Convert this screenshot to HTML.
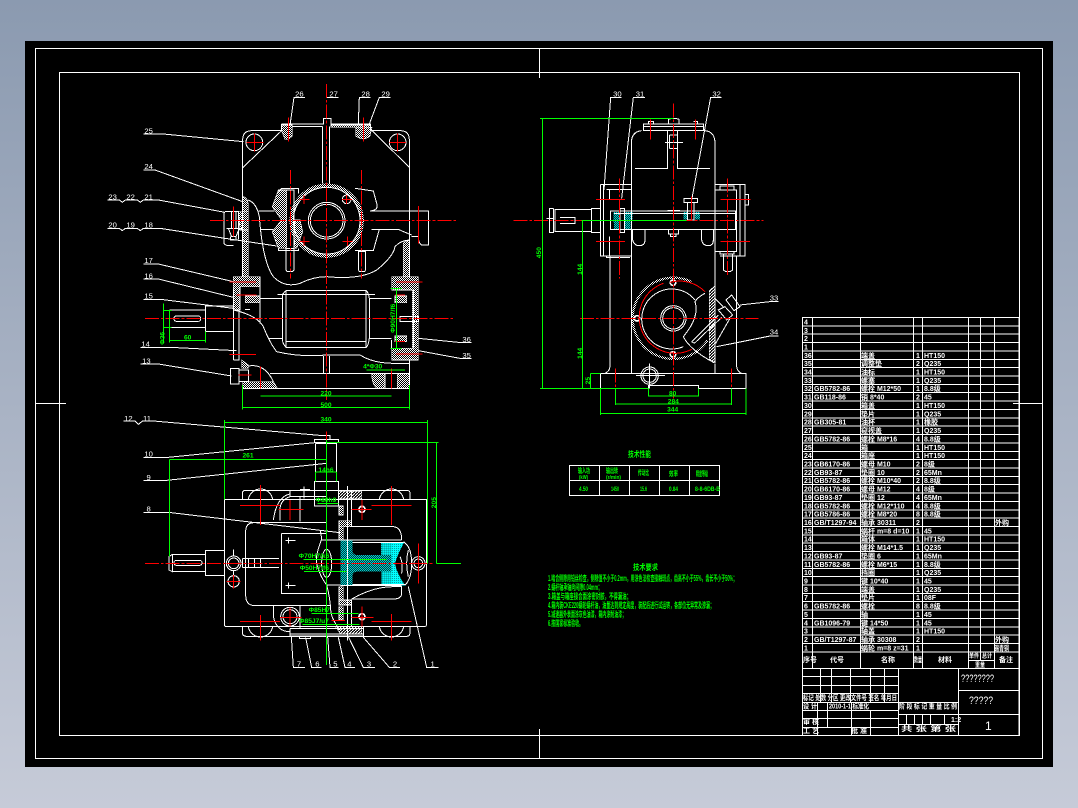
<!DOCTYPE html>
<html lang="zh"><head><meta charset="utf-8"><title>CAD</title>
<style>
html,body{margin:0;padding:0;width:1078px;height:808px;overflow:hidden;background:linear-gradient(#8b9ab0,#c6cbd8)}
svg{display:block;position:absolute;left:0;top:0}
text{font-family:"Liberation Sans","Noto Sans CJK SC",sans-serif}
.w{fill:none;stroke:#fff;stroke-width:3}
.g{fill:none;stroke:#00ff00;stroke-width:3}
.r{fill:none;stroke:#ff0000;stroke-width:3;stroke-dasharray:42 6 8 6}
.rs{fill:none;stroke:#ff0000;stroke-width:3}
.d{fill:url(#dot);stroke:#fff;stroke-width:2}
.lab text{fill:#fff;font-size:23px;text-anchor:middle}
.gt text{fill:#00ff00;font-size:20px;font-weight:bold;text-anchor:middle}
.t text{fill:#fff;font-size:7px;font-weight:bold}
.n text{fill:#00ff00;font-size:8px;font-weight:bold}
</style></head><body>
<svg width="1078" height="808" viewBox="0 0 1078 808" shape-rendering="crispEdges">
<defs>
<pattern id="dot" width="6" height="6" patternUnits="userSpaceOnUse"><rect width="6" height="6" fill="#000"/><rect width="3" height="3" fill="#fff"/><rect x="3" y="3" width="3" height="3" fill="#fff"/></pattern>
<pattern id="cy" width="6" height="6" patternUnits="userSpaceOnUse"><rect width="6" height="6" fill="#003c3c"/><rect width="3" height="3" fill="#00d0d0"/><rect x="3" y="3" width="3" height="3" fill="#00d0d0"/></pattern>
<pattern id="cb" width="6" height="6" patternUnits="userSpaceOnUse"><rect width="6" height="6" fill="#00ffff"/><rect width="3" height="3" fill="#00a0a0"/></pattern>
<pattern id="hd" width="9" height="9" patternUnits="userSpaceOnUse"><rect width="9" height="9" fill="#000"/><path d="M0 9L9 0" stroke="#fff" stroke-width="3"/></pattern>
</defs>
<rect x="25" y="41" width="1028" height="726" fill="#000"/>
<g fill="none" stroke="#fff">
<rect x="35.500" y="48.500" width="1007" height="710"/>
<rect x="59.500" y="72.500" width="960" height="663"/>
<path d="M539.500 48V78M539.500 729V758M35 403.500H66M1013 403.500H1042"/>
</g>

<!-- FRONT VIEW -->
<g transform="translate(100 80) scale(.33333)">
<g class="d">
<path d="M545 135H577V168L565 178H555L545 152Z"/>
<path d="M693 135H812V142H693Z"/>
<path d="M767 142H816L810 168Q790 185 767 168Z"/>
<path d="M428 350Q445 352 445 380V590H428Z"/>
<path d="M910 490Q918 482 928 480V590H910Z"/>
<path d="M535 330H560V505H535L517 455L545 420L517 380Z"/>
<path d="M585 420H600L608 455L590 505H583Z"/>
<path d="M415 395H445V450H420Z"/>
<path d="M400 590H480V620H420V690H400Z"/>
<path d="M436 648H480V668H436Z"/>
<path d="M875 590H955V840H875V805H937V630H875Z"/>
<path d="M885 648H920V668H885Z"/><path d="M885 768H920V785H885Z"/>
<path d="M428 905H520L532 925H428Z"/>
<path d="M815 880H855V925H830Q815 910 815 880Z"/>
<path d="M892 880H928V925H892Z"/>
<path d="M425 840L445 855V865H425Z"/>
</g>
<circle cx="680" cy="422" r="106" fill="none" stroke="url(#dot)" stroke-width="11"/>
<g class="w">
<path d="M428 263V180Q428 152 456 152H545M815 152H900Q928 152 928 180V590M428 263L545 152M928 262L816 152M428 263V590"/>
<circle cx="463" cy="187" r="25"/><circle cx="893" cy="187" r="25"/>
<path d="M545 132H670V115H693V132H812V152M577 140H667M545 132V152"/>
<path d="M667 310V160M688 310V160M667 160V140M688 160V140"/>
<circle cx="680" cy="422" r="100"/>
<circle cx="680" cy="422" r="55"/><circle cx="680" cy="422" r="49"/>
<circle cx="740" cy="358" r="13"/>
<path d="M475 393H523M482 448H520M815 393H985V495H965Q955 490 955 470H935M815 448H895Q910 455 935 465M810 393Q838 390 830 370L820 333L765 325M838 448L820 512H765"/>
<path d="M545 325H595V340M545 325L535 335M535 505V512H595V505"/>
<path d="M445 360Q470 370 478 410Q488 545 520 590Q555 625 600 610Q640 590 680 590Q780 600 830 570Q880 530 885 500Q900 482 928 480"/>
<path d="M558 505H582V570L578 575H562L558 570ZM775 515H797V570L793 575H779L775 570Z"/>
<path d="M560 330H582V505H560"/>
<path d="M375 395H415V478M372 395V490Q375 497 390 497H400M380 445H428M385 445L395 470H408L418 445M395 395V445M408 395V445M392 470V480H408V470"/>
<path d="M532 643H825M558 632H798V802H558ZM548 640V785M808 655V775M548 645Q552 635 560 632M798 632Q805 635 808 655M808 655H875M808 775H875M480 655H548M505 775H548M548 785Q552 798 560 802M798 802Q805 798 808 775M558 785H798"/>
<path d="M208 690H316V678H400M208 742H316V754H400M316 678V754M208 690V742M400 680V840M417 690V840H400"/>
<rect x="222" y="708" width="80" height="16" rx="7"/>
<path d="M400 690Q470 705 490 740Q510 790 530 815Q600 832 680 825H780Q820 850 880 850H928M928 840V925M428 925H928M510 880H928M670 828V880M688 828V880"/>
<path d="M392 865H417V912H392ZM417 870H445V905H417M445 858Q495 850 520 905"/>
<path d="M400 625V680M480 600V730M875 625H890M875 780V805M435 688H450M900 710H955V724H900ZM940 630V805"/>
<path d="M615 52H582L570 135M678 52H715M812 52H778L775 130M872 52H838L808 132M130 162H190L430 185M130 270H165L428 365M22 360H58L67 367L76 360H112L121 367L130 360H175L375 397M22 445H58L67 452L76 445H112L121 452L130 445H180L375 475L530 498M130 552H175L400 605M130 597H175L400 652M130 659H190L400 685M122 802H210L410 812M122 852H175L395 888M1115 788H1085L955 775M1115 836H1085L955 812"/>
</g>
<g class="r">
<path d="M680 12V960"/><path d="M330 421H1072"/><path d="M135 715H1065"/><path d="M572 270V595"/><path d="M785 270V595"/>
</g>
<g class="rs">
<path d="M440 187H490M463 160V215M868 187H918M893 160V215M598 358H628M612 345V372M726 358H756M740 345V372M598 484H628M612 470V498M728 484H758M742 470V498M565 112V185M790 112V185M400 380V470M955 378V490M388 606H468M888 606H968M388 823H468M888 822H968M481 860V925M875 865V925M415 885H455M410 645H470M885 645H915M885 785H915"/>
</g>
<g class="g">
<path d="M190 670V790M190 692H215M190 742H215M208 692V788M316 754V788M208 782H316M800 870H915M428 915V960M928 915V960M481 948H875M889 625V805M871 625H905M871 805H905"/>
</g>
<g class="gt">
<text x="263" y="778">60</text>
<text x="818" y="866">4*Φ30</text>
<text x="678" y="947">220</text>
<text transform="translate(193 775) rotate(-90)">Φ36</text>
<text transform="translate(885 715) rotate(-90)">Φ90H7/f6</text>
</g>
<g class="lab">
<text x="598" y="50">26</text><text x="701" y="50">27</text><text x="797" y="50">28</text><text x="857" y="50">29</text>
<text x="146" y="160">25</text><text x="146" y="267">24</text>
<text x="38" y="358">23</text><text x="92" y="358">22</text><text x="146" y="358">21</text>
<text x="38" y="442">20</text><text x="92" y="442">19</text><text x="146" y="442">18</text>
<text x="146" y="549">17</text><text x="146" y="595">16</text><text x="146" y="656">15</text>
<text x="137" y="800">14</text><text x="139" y="850">13</text>
<text x="1100" y="786">36</text><text x="1100" y="834">35</text>
</g>
</g>

<!-- TOP VIEW -->
<g transform="translate(100 400) scale(.33333)">
<path d="M722 422H757V450Q757 465 772 465H843V428H912Q890 470 885 490Q890 520 915 556H845V515H772Q757 515 757 530V556H722Z" fill="url(#cy)"/>
<path d="M875 428H912Q890 470 885 490Q890 520 915 556H875Z" fill="url(#cb)"/>
<path d="M845 428H875V465H845ZM845 515H875V556H845Z" fill="url(#cb)" opacity=".75"/>
<g class="d">
<path d="M717 318H730V345H717ZM717 362H755V380H717ZM717 380H730V420H717ZM717 560H730V600H717ZM717 600H755V615H717ZM717 620H730V660H717Z"/>
</g>
<path d="M716 273H785V297H716ZM706 680H785V702H722Z" fill="url(#hd)" stroke="#fff" stroke-width="2"/>
<g class="w">
<path d="M373 298H980V672Q980 680 972 680H380Q373 680 373 672ZM427 298V280Q427 271 437 271H920Q930 271 930 280V298M427 680V697Q427 709 440 709H920Q930 709 930 697V680"/>
<path d="M445 298A37 37 0 0 1 518 298M838 298A37 37 0 0 1 911 298M445 680A37 37 0 0 0 518 680M838 680A37 37 0 0 0 911 680"/>
<path d="M680 368H462Q437 368 437 395V585Q437 617 465 617H690M544 400H680M544 400V581H680"/>
<path d="M556 422H574M565 413V431M556 556H574M565 547V565M574 422H587M574 556H587"/>
<path d="M217 463H316V451H373M217 515H316V527H373M316 451V527M217 463L207 470V510L217 515V463"/>
<rect x="222" y="481" width="84" height="15" rx="7"/>
<circle cx="401" cy="490" r="22"/><circle cx="401" cy="490" r="16"/><circle cx="401" cy="544" r="17"/>
<circle cx="955" cy="490" r="20"/><circle cx="955" cy="490" r="13"/>
<circle cx="786" cy="328" r="9" stroke-width="5"/><circle cx="786" cy="650" r="9" stroke-width="5"/>
<path d="M401 448V470M401 512V525"/>
<path d="M427 475H537M427 503H537M427 475V503M445 475V503M463 475V503M481 475V503"/>
<ellipse cx="680" cy="490" rx="15" ry="42"/>
<path d="M664 420Q645 470 650 490Q660 530 680 555Q690 590 693 640Q700 665 720 690M664 420H722M680 555H722M660 390Q665 405 664 420"/>
<path d="M722 420H905M757 428H910M757 553H915M722 556H905M910 425Q935 440 935 490Q935 535 915 556M900 470Q910 490 905 520M925 450Q915 490 925 530"/>
<path d="M643 245H716V318H643ZM646 130H710V216M646 130V216M643 118H716V128H643ZM666 107H690V118"/>
<path d="M755 272V380M755 380H880Q905 382 905 420M755 597Q820 560 880 560H905V580Q905 597 880 597H755M755 600V680"/>
<path d="M570 272H680M570 290H680M570 272V290M612 260V295M600 268H630M643 290V318"/>
<path d="M520 360Q530 290 570 282M540 362V330Q540 300 570 290M600 290V365M520 617V650Q530 695 570 695M600 617V685"/>
<circle cx="570" cy="650" r="28"/><circle cx="570" cy="650" r="21"/>
<path d="M570 685H790M570 702H790M570 708H790M570 685V710M790 680V712M742 258V722M598 708H632V716H598Z" />
<path d="M1015 802H980L925 560M900 802H868L790 712M825 802H790L745 710M765 802H735L715 712M715 802H690L683 710M665 802H635L617 712M615 802H580L574 710M130 337H205L720 398M130 241H200L680 190M130 172H205L645 128M70 63H105L115 73L128 63H160L670 107"/>
</g>
<g class="r"><path d="M135 490H1000"/><path d="M680 95V740"/></g>
<g class="rs">
<path d="M420 316H540M481 255V375M815 316H935M874 258V375M420 664H540M481 645V722M815 664H935M874 642V722M535 328H610M570 300V360M540 652H605M570 622V680M755 328H815M786 300V360M755 652H820M786 620V680M380 490H425M380 544H422M401 525V565M930 490H978M955 430V550M695 662H735"/>
</g>
<g class="g">
<path d="M680 120V795M373 67H983M373 60V298M983 60V490M208 178H680M208 178V470M680 127H1016M1010 127V490M1010 490H1083M427 0V28M928 0V28M427 22H928M646 216H710M646 216V245M710 216V245M652 310H716M610 478H860M612 514H740M635 640H775M608 673H778"/>
</g>
<g class="gt">
<text x="678" y="21">500</text><text x="678" y="64">340</text><text x="444" y="173">261</text><text x="678" y="216">14h6</text>
<text x="678" y="306">Φ80h9</text><text x="642" y="474">Φ70H7/k6</text><text x="643" y="510">Φ50H7/f6</text><text x="658" y="636">Φ85H7</text><text x="642" y="669">Φ85J7/u7</text>
<text transform="translate(1008 308) rotate(-90)">205</text>
</g>
<g class="lab">
<text x="85" y="63">12</text><text x="141" y="63">11</text><text x="146" y="170">10</text><text x="146" y="240">9</text><text x="146" y="335">8</text>
<text x="597" y="800">7</text><text x="652" y="800">6</text><text x="706" y="800">5</text><text x="748" y="800">4</text><text x="807" y="800">3</text><text x="885" y="800">2</text><text x="998" y="800">1</text>
</g>
</g>

<!-- SIDE VIEW -->
<g transform="translate(510 80) scale(.33333)">
<path d="M310 396H332V448H312ZM345 396H368V420H362V448H345ZM520 396H532V418H520ZM555 396H570V418H555Z" fill="url(#cy)"/>
<circle cx="490" cy="715" r="122" fill="none" stroke="url(#dot)" stroke-width="7" stroke-dasharray="560 210" stroke-dashoffset="-70"/>
<path d="M598 632L615 618V848L598 838Z" fill="url(#hd)" stroke="#fff" stroke-width="2"/>
<g class="w">
<path d="M400 132H580V152H400ZM400 140H580M415 132V124H430V132M550 124H563V132M475 132V118Q490 112 507 118V132"/>
<path d="M364 190Q364 155 395 152M585 152Q615 155 615 190M364 190V880M615 190V620M615 850V880"/>
<path d="M375 265H473V152M503 152V265H600M465 187H519M478 165H503M478 205H503M478 165V205M503 165V205"/>
<path d="M272 313H364M272 313V528H364M280 313V528M290 328H364M298 328V360M298 470V528M290 528V533H360"/>
<path d="M302 393H677V449H302ZM302 393V449M312 400H677"/>
<path d="M272 385H244V458H272M244 388H135V455H244M130 385V458H118V385H130M110 415H130M150 412H195V430H150"/>
<path d="M616 313H705V528H630M690 313V528M630 318H672V330H630ZM617 330H680V515H617M630 515H672V522H630ZM640 522H668V570L660 575H648L640 570ZM705 343H716V375H705"/>
<path d="M300 530V860Q298 875 285 880M680 530V860Q682 875 695 880M272 880H708V925H565V916H415V925H272Z"/>
<circle cx="419" cy="887" r="26"/><circle cx="419" cy="887" r="20"/><path d="M378 887H465M419 850V925"/>
<path d="M555 660A90 90 0 1 0 520 800"/>
<circle cx="490" cy="715" r="38"/><circle cx="490" cy="715" r="32"/>
<path d="M585 640Q565 650 555 665Q570 710 520 770Q540 810 612 848"/>
<path d="M545 785L625 705M553 790L635 712M545 785L553 790M615 655L640 680M660 715L617 790M625 690L645 680L668 705L650 720ZM648 660L665 645L690 680L672 692Z"/>
<path d="M522 355H562V368H522ZM532 368H552V420H532ZM472 392H510M475 449V462H505V449M482 462V470H498V462M368 449V480Q372 497 388 497Q405 497 405 480V449M575 449V480Q578 497 595 497Q610 497 610 480V449"/>
<path d="M335 52H302L282 330M405 52H370L335 355M635 52H602L545 360M805 665H780L690 675M805 768H780L620 800"/>
<path d="M330 385H344V458H330Z"/>
<circle cx="489" cy="608" r="8" stroke-width="5"/><circle cx="381" cy="715" r="8" stroke-width="5"/><circle cx="489" cy="823" r="8" stroke-width="5"/>
</g>
<path d="M460 610A108 108 0 1 0 545 808" fill="none" stroke="#f00" stroke-width="3"/>
<path d="M585 635A108 108 0 0 0 480 607" fill="none" stroke="#f00" stroke-width="3"/>
<g class="r"><path d="M490 70V955"/><path d="M10 421H760"/><path d="M210 715H745"/><path d="M328 295V595"/><path d="M652 295V590"/><path d="M317 865V925"/><path d="M665 865V925"/></g>
<g class="rs"><path d="M258 358H345M258 484H345M632 358H722M632 484H720M422 118V178M556 118V178M545 350V422"/></g>
<g class="g">
<path d="M90 115H490M97 115V925M90 925H415M218 420V925M215 421H530M242 880V925M242 880H272M272 925V1005M708 925V1005M272 1000H708M317 925V975M665 925V975M317 972H665M415 925V950M565 925V950M415 948H565"/>
</g>
<g class="gt">
<text transform="translate(93 518) rotate(-90)">450</text><text transform="translate(216 568) rotate(-90)">144</text><text transform="translate(216 820) rotate(-90)">144</text><text transform="translate(240 902) rotate(-90)">25</text>
<text x="488" y="946">80</text><text x="490" y="970">284</text><text x="488" y="995">344</text>
</g>
<g class="lab">
<text x="322" y="50">30</text><text x="390" y="50">31</text><text x="620" y="50">32</text><text x="792" y="662">33</text><text x="792" y="764">34</text>
</g>
</g>

<!-- TECH TABLE -->
<g fill="none" stroke="#fff">
<rect x="569.500" y="465.500" width="150" height="30"/>
<path d="M569 480.500H720M599.500 465V495M629.500 465V495M659.500 465V495M689.500 465V495"/>
</g>
<g class="n">
<text x="628" y="457" textLength="23" lengthAdjust="spacingAndGlyphs">技术性能</text>
<text x="578" y="473" textLength="12" lengthAdjust="spacingAndGlyphs" style="font-size:7px">输入功</text>
<text x="579" y="479" style="font-size:5px" textLength="9" lengthAdjust="spacingAndGlyphs">(kW)</text>
<text x="606" y="473" style="font-size:7px" textLength="12" lengthAdjust="spacingAndGlyphs">输出转</text>
<text x="606" y="479" style="font-size:5px" textLength="15" lengthAdjust="spacingAndGlyphs">(r/min)</text>
<text x="638" y="475" style="font-size:7px" textLength="11" lengthAdjust="spacingAndGlyphs">传动比</text>
<text x="669" y="476" style="font-size:7px" textLength="9" lengthAdjust="spacingAndGlyphs">效率</text>
<text x="696" y="476" style="font-size:7px" textLength="12" lengthAdjust="spacingAndGlyphs">精度等级</text>
<text x="579" y="491" style="font-size:6px" textLength="9" lengthAdjust="spacingAndGlyphs">4.50</text>
<text x="611" y="491" style="font-size:6px" textLength="8" lengthAdjust="spacingAndGlyphs">1450</text>
<text x="640" y="491" style="font-size:6px" textLength="7" lengthAdjust="spacingAndGlyphs">15.6</text>
<text x="669" y="491" style="font-size:6px" textLength="9" lengthAdjust="spacingAndGlyphs">0.84</text>
<text x="695" y="491" style="font-size:6px" textLength="25" lengthAdjust="spacingAndGlyphs">8-8-6DB-B</text>
<text x="633" y="570" textLength="25" lengthAdjust="spacingAndGlyphs">技术要求</text>
<text x="548" y="581" textLength="189" lengthAdjust="spacingAndGlyphs">1.啮合侧隙用铅丝检查，侧隙值不小于0.2mm，用涂色法检查接触斑点，齿高不小于55%，齿长不小于50%；</text>
<text x="548" y="590" textLength="54" lengthAdjust="spacingAndGlyphs">2.蜗杆轴承轴向间隙0.04mm；</text>
<text x="548" y="599" textLength="83" lengthAdjust="spacingAndGlyphs">3.箱盖与箱座接合面涂密封胶，不得漏油；</text>
<text x="548" y="608" textLength="166" lengthAdjust="spacingAndGlyphs">4.箱内装CKE220蜗轮蜗杆油，油量达到规定高度，装配后进行试运转，各部位无异常及渗漏；</text>
<text x="548" y="617" textLength="78" lengthAdjust="spacingAndGlyphs">5.减速器外表面涂灰色油漆，箱内涂耐油漆；</text>
<text x="548" y="626" textLength="35" lengthAdjust="spacingAndGlyphs">6.按国家标准验收。</text>
</g>

<!-- PARTS TABLE -->
<g fill="none" stroke="#fff">
<path d="M802.500 317.500V735.500M812.500 317.500V668M860.500 317.500V668M913.500 317.500V668M922.500 317.500V668M968.500 317.500V668M980.500 317.500V652M994.500 317.500V668M1019 317.500V735"/>
<path d="M802 317.500h217M802 325.900h217M802 334.200h217M802 342.600h217M802 350.900h217M802 359.300h217M802 367.700h217M802 376h217M802 384.400h217M802 392.700h217M802 401.100h217M802 409.500h217M802 417.800h217M802 426.200h217M802 434.500h217M802 442.900h217M802 451.300h217M802 459.600h217M802 468h217M802 476.300h217M802 484.700h217M802 493.100h217M802 501.400h217M802 509.800h217M802 518.100h217M802 526.500h217M802 534.900h217M802 543.200h217M802 551.600h217M802 559.900h217M802 568.300h217M802 576.700h217M802 585h217M802 593.400h217M802 601.700h217M802 610.100h217M802 618.500h217M802 626.800h217M802 635.200h217M802 643.500h217M802 651.900h217M802 668.500h217M968 660.500H994M980.500 652V660"/>
<path d="M802 676.500H898M802 685.500H898M802 693.500H898M802 702.500H898M802 710.500H898M802 718.500H898M802 727.500H898M802 735.500H1019"/>
<path d="M898.500 668V735.500M958.500 668V735.500M958 690.500H1019M958 714.500H1019M898 702.500H958M898 714.500H958M898 724.500H958"/>
<path d="M820.500 668V702M831.500 668V702M850.500 668V702M870.500 668V702M884.500 668V702M817.500 702V735M827.500 702V727M851.500 702V735M870.500 710V735"/>
<path d="M906.500 714V724M914.500 714V724M922.500 714V724M930.500 714V724M944.500 714V724"/>
</g>
<g class="t">
<g>
<text x="804" y="324.400">4</text><text x="804" y="332.800">3</text><text x="804" y="341.100">2</text><text x="804" y="349.500">1</text>
<text x="804" y="357.800">36</text><text x="804" y="366.200">35</text><text x="804" y="374.500">34</text><text x="804" y="382.900">33</text><text x="804" y="391.200">32</text><text x="804" y="399.600">31</text><text x="804" y="408">30</text><text x="804" y="416.300">29</text><text x="804" y="424.700">28</text><text x="804" y="433">27</text><text x="804" y="441.400">26</text><text x="804" y="449.800">25</text><text x="804" y="458.100">24</text><text x="804" y="466.500">23</text><text x="804" y="474.800">22</text><text x="804" y="483.200">21</text><text x="804" y="491.600">20</text><text x="804" y="499.900">19</text><text x="804" y="508.300">18</text><text x="804" y="516.600">17</text><text x="804" y="525">16</text><text x="804" y="533.400">15</text><text x="804" y="541.700">14</text><text x="804" y="550.100">13</text><text x="804" y="558.400">12</text><text x="804" y="566.800">11</text><text x="804" y="575.200">10</text><text x="804" y="583.500">9</text><text x="804" y="591.900">8</text><text x="804" y="600.200">7</text><text x="804" y="608.600">6</text><text x="804" y="617">5</text><text x="804" y="625.300">4</text><text x="804" y="633.700">3</text><text x="804" y="642">2</text><text x="804" y="650.400">1</text>
</g>
<g>
<text x="814" y="391.200">GB5782-86</text><text x="814" y="399.600">GB118-86</text><text x="814" y="424.700">GB305-81</text><text x="814" y="441.400">GB5782-86</text><text x="814" y="466.500">GB6170-86</text><text x="814" y="474.800">GB93-87</text><text x="814" y="483.200">GB5782-86</text><text x="814" y="491.600">GB6170-86</text><text x="814" y="499.900">GB93-87</text><text x="814" y="508.300">GB5782-86</text><text x="814" y="516.600">GB5786-86</text><text x="814" y="525">GB/T1297-94</text><text x="814" y="558.400">GB93-87</text><text x="814" y="566.800">GB5782-86</text><text x="814" y="608.600">GB5782-86</text><text x="814" y="625.300">GB1096-79</text><text x="814" y="642">GB/T1297-87</text>
</g>
<g>
<text x="861" y="357.800">端盖</text><text x="861" y="366.200">调整垫</text><text x="861" y="374.500">油标</text><text x="861" y="382.900">螺塞</text><text x="861" y="391.200">螺栓 M12*50</text><text x="861" y="399.600">销 8*40</text><text x="861" y="408">箱盖</text><text x="861" y="416.300">垫片</text><text x="861" y="424.700">油杯</text><text x="861" y="433">窥视盖</text><text x="861" y="441.400">螺栓 M8*16</text><text x="861" y="449.800">箱</text><text x="861" y="458.100">箱座</text><text x="861" y="466.500">螺母 M10</text><text x="861" y="474.800">垫圈 10</text><text x="861" y="483.200">螺栓 M10*40</text><text x="861" y="491.600">螺母 M12</text><text x="861" y="499.900">垫圈 12</text><text x="861" y="508.300">螺栓 M12*110</text><text x="861" y="516.600">螺栓 M8*20</text><text x="861" y="525">轴承 30311</text><text x="861" y="533.400">蜗杆 m=8 d=10</text><text x="861" y="541.700">箱体</text><text x="861" y="550.100">螺栓 M14*1.5</text><text x="861" y="558.400">垫圈 6</text><text x="861" y="566.800">螺栓 M6*15</text><text x="861" y="575.200">挡圈</text><text x="861" y="583.500">键 10*40</text><text x="861" y="591.900">端盖</text><text x="861" y="600.200">垫片</text><text x="861" y="608.600">螺栓</text><text x="861" y="617">轴</text><text x="861" y="625.300">键 14*50</text><text x="861" y="633.700">轴盖</text><text x="861" y="642">轴承 30308</text><text x="861" y="650.400">蜗轮 m=8 z=31</text>
</g>
<g>
<text x="916" y="357.800">1</text><text x="916" y="366.200">2</text><text x="916" y="374.500">1</text><text x="916" y="382.900">1</text><text x="916" y="391.200">1</text><text x="916" y="399.600">2</text><text x="916" y="408">1</text><text x="916" y="416.300">1</text><text x="916" y="424.700">1</text><text x="916" y="433">1</text><text x="916" y="441.400">4</text><text x="916" y="449.800">1</text><text x="916" y="458.100">1</text><text x="916" y="466.500">2</text><text x="916" y="474.800">2</text><text x="916" y="483.200">2</text><text x="916" y="491.600">4</text><text x="916" y="499.900">4</text><text x="916" y="508.300">4</text><text x="916" y="516.600">8</text><text x="916" y="525">2</text><text x="916" y="533.400">1</text><text x="916" y="541.700">1</text><text x="916" y="550.100">1</text><text x="916" y="558.400">1</text><text x="916" y="566.800">1</text><text x="916" y="575.200">1</text><text x="916" y="583.500">1</text><text x="916" y="591.900">1</text><text x="916" y="600.200">1</text><text x="916" y="608.600">8</text><text x="916" y="617">1</text><text x="916" y="625.300">1</text><text x="916" y="633.700">1</text><text x="916" y="642">2</text><text x="916" y="650.400">1</text>
</g>
<g>
<text x="924" y="357.800">HT150</text><text x="924" y="366.200">Q235</text><text x="924" y="374.500">HT150</text><text x="924" y="382.900">Q235</text><text x="924" y="391.200">8.8级</text><text x="924" y="399.600">45</text><text x="924" y="408">HT150</text><text x="924" y="416.300">Q235</text><text x="924" y="424.700">橡胶</text><text x="924" y="433">Q235</text><text x="924" y="441.400">8.8级</text><text x="924" y="449.800">HT150</text><text x="924" y="458.100">HT150</text><text x="924" y="466.500">8级</text><text x="924" y="474.800">65Mn</text><text x="924" y="483.200">8.8级</text><text x="924" y="491.600">8级</text><text x="924" y="499.900">65Mn</text><text x="924" y="508.300">8.8级</text><text x="924" y="516.600">8.8级</text><text x="924" y="533.400">45</text><text x="924" y="541.700">HT150</text><text x="924" y="550.100">Q235</text><text x="924" y="558.400">65Mn</text><text x="924" y="566.800">8.8级</text><text x="924" y="575.200">Q235</text><text x="924" y="583.500">45</text><text x="924" y="591.900">Q235</text><text x="924" y="600.200">08F</text><text x="924" y="608.600">8.8级</text><text x="924" y="617">45</text><text x="924" y="625.300">45</text><text x="924" y="633.700">HT150</text>
</g>
<text x="995" y="525">外购</text><text x="995" y="642">外购</text><text x="994" y="650.400" textLength="15" lengthAdjust="spacingAndGlyphs">锡青铜</text>
<text x="803" y="662">序号</text><text x="830" y="662">代号</text><text x="881" y="662">名称</text><text x="914" y="662" textLength="8" lengthAdjust="spacingAndGlyphs">数量</text><text x="938" y="662">材料</text>
<text x="969" y="658" style="font-size:6px" textLength="10" lengthAdjust="spacingAndGlyphs">单件</text><text x="982" y="658" style="font-size:6px" textLength="10" lengthAdjust="spacingAndGlyphs">总计</text><text x="975" y="667" style="font-size:6px" textLength="10" lengthAdjust="spacingAndGlyphs">重量</text><text x="999" y="662">备注</text>
<text x="803" y="700" textLength="94" lengthAdjust="spacingAndGlyphs">标记 处数 分区 更改文件号 签名 年月日</text>
<text x="803" y="708.500" textLength="14" lengthAdjust="spacingAndGlyphs">设 计</text><text x="829" y="708.500" textLength="40" lengthAdjust="spacingAndGlyphs">2010-1-1 标准化</text>
<text x="899" y="708.500" textLength="58" lengthAdjust="spacingAndGlyphs">阶 段 标 记 重 量 比 例</text>
<text x="803" y="724">审 核</text><text x="803" y="733">工 艺</text><text x="851" y="733">批 准</text>
<text x="951" y="722">1:2</text>
<text x="901" y="731" textLength="55" lengthAdjust="spacingAndGlyphs">共  张  第  张</text>
<text x="961" y="682" style="font-size:11px;font-weight:normal" textLength="33" lengthAdjust="spacingAndGlyphs">????????</text>
<text x="969" y="704" style="font-size:11px;font-weight:normal" textLength="24" lengthAdjust="spacingAndGlyphs">?????</text>
<text x="985" y="730" style="font-size:12px;font-weight:normal">1</text>
</g>
</svg>
</body></html>
